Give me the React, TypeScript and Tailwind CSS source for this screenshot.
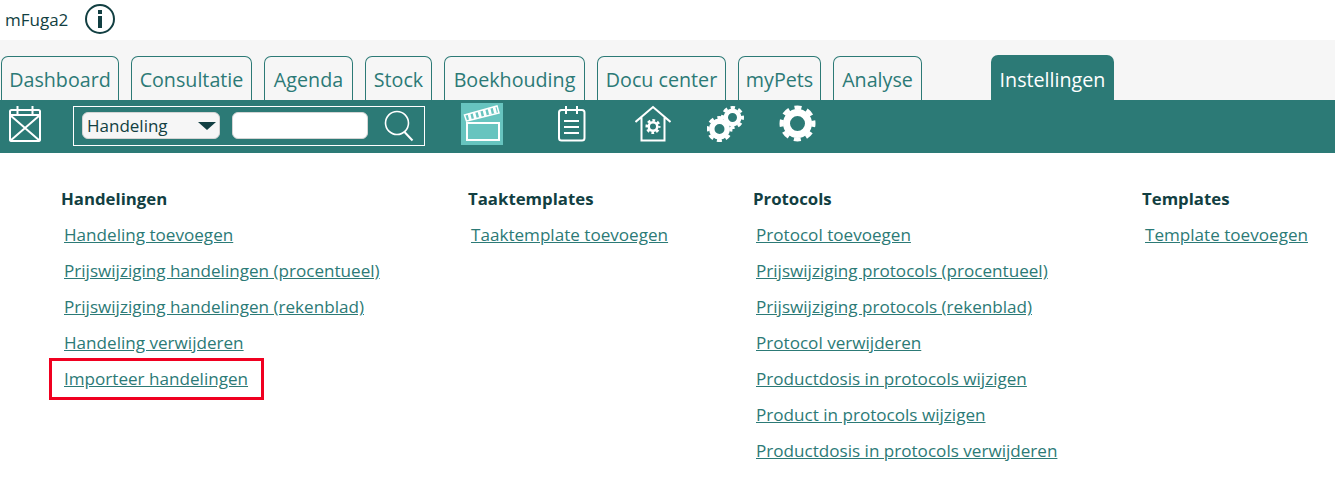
const font = "font-['Open_Sans','Noto_Sans',sans-serif]";

const tabs = [
  { label: 'Dashboard', w: 'w-[118px]' },
  { label: 'Consultatie', w: 'w-[121px]' },
  { label: 'Agenda', w: 'w-[89px]' },
  { label: 'Stock', w: 'w-[67px]' },
  { label: 'Boekhouding', w: 'w-[141px]' },
  { label: 'Docu center', w: 'w-[129px]' },
  { label: 'myPets', w: 'w-[83px]' },
  { label: 'Analyse', w: 'w-[89px]' },
];

const columns = [
  {
    title: 'Handelingen', w: 'w-[407px]',
    links: ['Handeling toevoegen', 'Prijswijziging handelingen (procentueel)', 'Prijswijziging handelingen (rekenblad)', 'Handeling verwijderen', 'Importeer handelingen'],
  },
  { title: 'Taaktemplates', w: 'w-[285px]', links: ['Taaktemplate toevoegen'] },
  {
    title: 'Protocols', w: 'w-[389px]',
    links: ['Protocol toevoegen', 'Prijswijziging protocols (procentueel)', 'Prijswijziging protocols (rekenblad)', 'Protocol verwijderen', 'Productdosis in protocols wijzigen', 'Product in protocols wijzigen', 'Productdosis in protocols verwijderen'],
  },
  { title: 'Templates', w: 'w-[190px]', links: ['Template toevoegen'] },
];

function Gear({ cx, cy, inner, body, tip }: { cx: number; cy: number; inner: number; body: number; tip: number }) {
  const toothMid = (body - 0.5 + tip) / 2;
  const circ = 2 * Math.PI * toothMid;
  const on = (circ / 8) * 0.56;
  const off = (circ / 8) * 0.44;
  return (
    <g fill="none" stroke="white">
      <circle cx={cx} cy={cy} r={(inner + body) / 2} strokeWidth={body - inner} />
      <circle cx={cx} cy={cy} r={toothMid} strokeWidth={tip - body + 0.5} strokeDasharray={`${on} ${off}`} strokeDashoffset={on / 2} />
    </g>
  );
}

function CalendarIcon() {
  return (
    <svg width="36" height="38" viewBox="0 0 36 38" fill="none" stroke="white" strokeWidth="2">
      <rect x="2" y="5" width="30" height="31" rx="1.5" />
      <path d="M9.5 1v8M24.5 1v8M2 10h30M2 10l30 26M32 10L2 36" />
    </svg>
  );
}

function SearchIcon() {
  return (
    <svg width="30" height="32" viewBox="0 0 30 32" fill="none" stroke="white" strokeWidth="1.6">
      <circle cx="13" cy="13" r="11.5" />
      <path d="M20.5 22l8 8.5" strokeWidth="2" />
    </svg>
  );
}

function ClapperIcon() {
  return (
    <div className="flex h-[42px] w-[42px] items-center justify-center bg-[#67c4bf]">
      <svg width="38" height="38" viewBox="0 0 38 38" fill="none" stroke="white">
        <rect x="4" y="18" width="32" height="17" strokeWidth="2" />
        <path d="M1.5 10L34 1l2 7L3.5 16z" strokeWidth="1.5" />
        <path d="M6 9l1.5 6M11 8l1.5 6M16 6.5l1.5 6M21 5l1.5 6M26 3.5l1.5 6M31 2.2l1.5 6" strokeWidth="2.8" />
      </svg>
    </div>
  );
}

function NotesIcon() {
  return (
    <svg width="29" height="37" viewBox="0 0 29 37" fill="none" stroke="white" strokeWidth="2">
      <rect x="2" y="5" width="25.5" height="30.5" rx="2.5" />
      <path d="M9 1v8M20 1v8M7 16h15M7 22h15M7 28h15" />
    </svg>
  );
}

function HouseIcon() {
  return (
    <svg width="36" height="37" viewBox="0 0 36 37" fill="none" stroke="white" strokeWidth="2">
      <path d="M0.5 17L18 2l17.5 15M6.5 12v23.5h23V12" />
      <Gear cx={18} cy={21.5} inner={3} body={5.5} tip={7.5} />
    </svg>
  );
}

function GearsIcon() {
  return (
    <svg width="37" height="36" viewBox="0 0 37 36">
      <Gear cx={25.5} cy={11.5} inner={4.5} body={9} tip={11.5} />
      <Gear cx={12.5} cy={23} inner={5} body={10.5} tip={13} />
    </svg>
  );
}

function BigGearIcon() {
  return (
    <svg width="37" height="37" viewBox="0 0 37 37">
      <Gear cx={18.5} cy={18.5} inner={7.5} body={14.5} tip={18} />
    </svg>
  );
}

export default function App() {
  return (
    <div className={`h-[489px] w-[1335px] overflow-hidden bg-white text-[#123f42] ${font}`}>
      <header className="flex h-10 items-center pl-[5px]">
        <span className="text-[17px]">mFuga2</span>
        <svg className="ml-4 mt-[-2px]" width="32" height="32" viewBox="0 0 32 32" fill="none">
          <circle cx="16" cy="16" r="14" stroke="#123f42" strokeWidth="2" />
          <rect x="14" y="13" width="4" height="12" fill="#123f42" />
          <rect x="14" y="7" width="4" height="4" fill="#123f42" />
        </svg>
      </header>

      <nav className="flex h-[60px] items-end bg-[#f6f6f6] pl-px">
        <div className="flex gap-3">
          {tabs.map((t) => (
            <div key={t.label} className={`flex h-11 items-center justify-center rounded-t-[7px] border border-b-0 border-[#2c7a76] pt-[3px] text-[19.7px] text-[#2c7a76] ${t.w}`}>
              {t.label}
            </div>
          ))}
        </div>
        <div className="ml-[69px] flex h-[45px] w-[123px] items-center justify-center rounded-t-[7px] bg-[#2c7a76] pt-[4px] text-[19.7px] text-white">
          Instellingen
        </div>
      </nav>

      <div className="flex h-[53px] items-center bg-[#2c7a76] pb-[2px] pl-2">
        <div className="mb-1 flex"><CalendarIcon /></div>
        <div className="ml-[29px] flex h-10 w-[352px] items-center border border-white pl-2">
          <div className="flex h-[27px] w-[138px] items-center justify-between rounded-[6px] border border-[#d4d4d4] bg-[#f6f6f6] pl-[4px] pr-[3px] text-[17px] text-[#123f42]">
            Handeling
            <span className="h-0 w-0 border-x-[9px] border-t-[8px] border-x-transparent border-t-[#123f42]" />
          </div>
          <div className="ml-3 h-[27px] w-[136px] rounded-[6px] border border-[#d4d4d4] bg-white" />
          <div className="ml-4 flex"><SearchIcon /></div>
        </div>
        <div className="mb-1 ml-9"><ClapperIcon /></div>
        <div className="mb-1 ml-[54px] flex"><NotesIcon /></div>
        <div className="mb-1 ml-[49px] flex"><HouseIcon /></div>
        <div className="mb-1 ml-9 flex"><GearsIcon /></div>
        <div className="mb-1 ml-[35px] flex"><BigGearIcon /></div>
      </div>

      <main className="flex pl-[61px] pt-[34px]">
        {columns.map((c) => (
          <section key={c.title} className={`shrink-0 ${c.w}`}>
            <h2 className="h-6 text-[16.8px] font-bold leading-6">{c.title}</h2>
            <ul className="mt-3 flex flex-col gap-3 pl-[3px]">
              {c.links.map((l) => (
                <li key={l} className="relative h-6 text-[17.1px] leading-6 text-[#2c7a76] underline">
                  {l}
                  {l === 'Importeer handelingen' && (
                    <span className="absolute left-[-15px] top-[-9px] h-[42px] w-[215px] border-[3px] border-[#f00020]" />
                  )}
                </li>
              ))}
            </ul>
          </section>
        ))}
      </main>
    </div>
  );
}
